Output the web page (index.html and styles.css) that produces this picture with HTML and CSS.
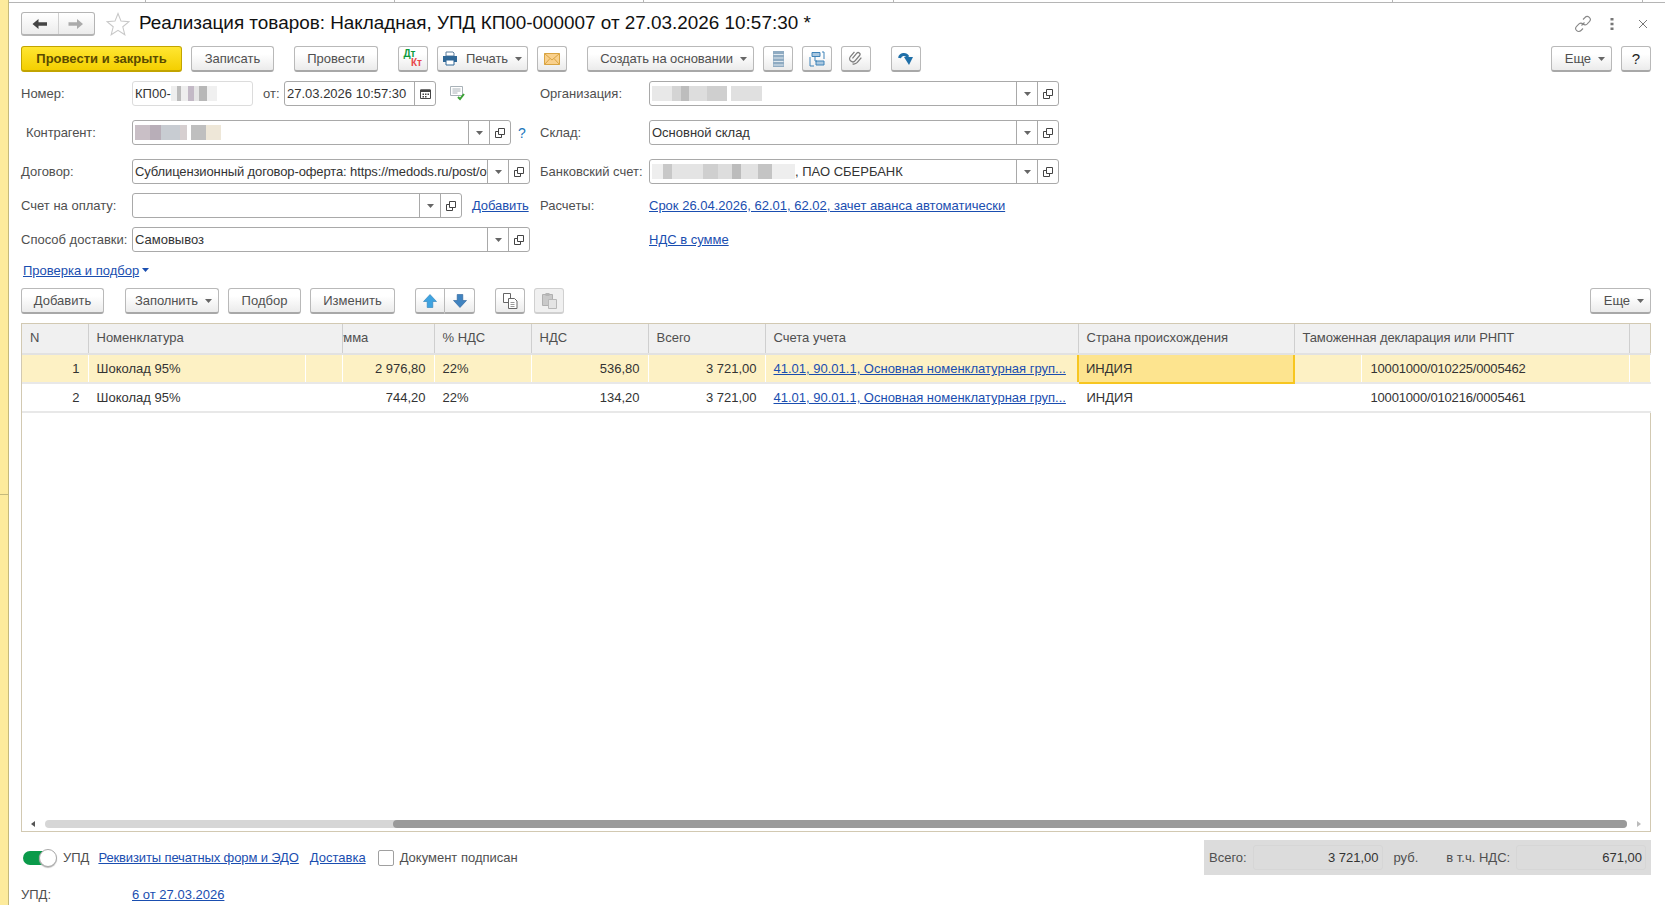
FILE: index.html
```html
<!DOCTYPE html>
<html lang="ru">
<head>
  <meta charset="UTF-8">
  <title>Реализация товаров: Накладная, УПД КП00-000007</title>
  <link rel="stylesheet" href="styles.css">
</head>
<body>
  <svg class="sprite" xmlns="http://www.w3.org/2000/svg">
    <symbol id="i-open" viewBox="0 0 12 12"><path d="M4.5 1.5h6v6h-6zM4.5 4.5h-3v6h6v-3" fill="none" stroke="#444" stroke-width="1"/></symbol>
    <symbol id="i-drop" viewBox="0 0 7 4"><path d="M0 0h7L3.500 4z" fill="currentColor"/></symbol>
  </svg>

  <div class="side-strip">
    <div class="side-top"></div>
    <div class="side-bottom"></div>
  </div>

  <div class="window">
    <div class="top-line">
      <span class="tab-a"></span><span class="tab-b"></span><span class="tab-c"></span><span class="tab-d"></span><span class="tab-e"></span><span class="tab-f"></span>
    </div>

    <div class="main">
      <!-- title -->
      <div class="title-row">
        <div class="nav-group">
          <button class="nav-btn"><svg width="16" height="12" viewBox="0 0 16 12"><path d="M0.5 6L6.5 1v3.2H15v3.6H6.5V11z" fill="#444"/></svg></button>
          <button class="nav-btn"><svg width="16" height="12" viewBox="0 0 16 12"><path d="M15 6L9 1v3.2H0.5v3.6H9V11z" fill="#aaa"/></svg></button>
        </div>
        <svg class="star" width="24" height="24" viewBox="0 0 24 24"><path d="M12 1.5l3 7.6 8 .6-6.2 5.1 2 7.9L12 18.4l-6.8 4.3 2-7.9L1 9.7l8-.6z" fill="#fff" stroke="#c8c8c8" stroke-width="1.1"/></svg>
        <h1 class="doc-title">Реализация товаров: Накладная, УПД КП00-000007 от 27.03.2026 10:57:30 *</h1>
        <div class="win-icons">
          <svg width="18" height="18" viewBox="0 0 18 18"><path d="M7.5 10.5l3-3M9 4.500l2-2a3 3 0 0 1 4.400 4.200l-2.400 2.400a3 3 0 0 1-4-.2M9 13.500l-2 2a3 3 0 0 1-4.400-4.200L5 8.900a3 3 0 0 1 4 .2" fill="none" stroke="#888" stroke-width="1.1"/></svg>
          <svg class="kebab" width="4" height="12" viewBox="0 0 4 12"><path d="M0.5 0h3v2.5h-3zM0.5 4.700h3v2.500h-3zM0.5 9.400h3v2.500h-3z" fill="#777"/></svg>
          <svg class="close" width="10" height="10" viewBox="0 0 10 10"><path d="M1 1l8 8M9 1l-8 8" stroke="#777" stroke-width="1"/></svg>
        </div>
      </div>

      <!-- main toolbar -->
      <div class="toolbar">
        <button class="btn btn-primary w-161">Провести и закрыть</button>
        <button class="btn w-83 ml-9">Записать</button>
        <button class="btn w-84 ml-20">Провести</button>
        <button class="btn btn-icon ml-20 dtkt"><span class="dt">Дт</span><span class="kt">Кт</span></button>
        <button class="btn btn-drop btn-print w-91 ml-9">
          <svg class="print-ico" width="16" height="15" viewBox="0 0 16 15"><path d="M4 1h7l1 1v3H4z" fill="#fff" stroke="#5b7d9c"/><path d="M1 5h14v6H1z" fill="#2f6796"/><path d="M4 9h8v5H4z" fill="#fff" stroke="#2f6796"/></svg>
          Печать <svg class="drop" width="7" height="4"><use href="#i-drop"/></svg>
        </button>
        <button class="btn btn-icon ml-9">
          <svg width="16" height="12" viewBox="0 0 16 12"><path d="M0.5 0.5h15v11h-15z" fill="#f9d08c" stroke="#d9a441"/><path d="M0.5 0.5L8 7l7.500-6.500M0.5 11.500L6 5.500M15.500 11.500L10 5.500" fill="none" stroke="#d9a441"/></svg>
        </button>
        <button class="btn btn-drop w-167 ml-20">Создать на основании <svg class="drop" width="7" height="4"><use href="#i-drop"/></svg></button>
        <button class="btn btn-icon ml-9">
          <svg width="11" height="16" viewBox="0 0 11 16"><path d="M0 0h11v16H0z" fill="#8fabc2"/><path d="M0.500 3.500h10M0.500 7h10M0.500 10.500h10M0.500 14h10" stroke="#dfe8ef"/></svg>
        </button>
        <button class="btn btn-icon ml-9">
          <svg width="16" height="16" viewBox="0 0 16 16"><path d="M3 1.500h8v4H3zM7 10h8v4H7z" fill="#a9c7df" stroke="#3f83b8"/><path d="M1 6v9h4M15 8V1h-2M6 6v4h2" fill="none" stroke="#3f83b8"/></svg>
        </button>
        <button class="btn btn-icon ml-9">
          <svg width="16" height="16" viewBox="0 0 16 16"><path d="M6 12V4.500a2 2 0 0 1 4 0V12a3.500 3.500 0 0 1-7 0V5M13 5v7a5.500 5.500 0 0 1-3 4.600" transform="rotate(40 8 8) translate(-0.5 -1) scale(0.9)" fill="none" stroke="#7d7d7d" stroke-width="1.400"/></svg>
        </button>
        <button class="btn btn-icon ml-20">
          <svg width="16" height="15" viewBox="0 0 16 15"><path d="M1.500 7C2.500 3 7.500 2 10 6" fill="none" stroke="#1f6fa8" stroke-width="3"/><path d="M6 6h9l-4 8z" fill="#1f6fa8"/></svg>
        </button>
        <div class="toolbar-end">
          <button class="btn btn-drop w-61">Еще <svg class="drop" width="7" height="4"><use href="#i-drop"/></svg></button>
          <button class="btn btn-help ml-9">?</button>
        </div>
      </div>

      <!-- form fields -->
      <div class="form">
        <div class="form-row">
          <div class="col-left">
            <span class="label">Номер:</span>
            <div class="field field-plain w-121"><span class="field-text">КП00-<span class="mosaic mosaic-num"></span></span></div>
            <span class="label-from">от:</span>
            <div class="field w-152">
              <span class="field-text">27.03.2026 10:57:30</span>
              <span class="field-btn">
                <svg width="11" height="11" viewBox="0 0 11 11"><path d="M0.500 2h10v8.500h-10z" fill="#fff" stroke="#444"/><path d="M0.500 1.500h10V4h-10zM2.500 5.500h1.500V7H2.500zM5 5.500h1.500V7H5zM7.500 5.500H9V7H7.500zM2.500 8h1.500v1.500H2.500zM5 8h1.500v1.500H5z" fill="#444"/></svg>
              </span>
            </div>
            <svg class="comment-ico" width="16" height="15" viewBox="0 0 16 15"><path d="M0.500 0.500h12v9h-12zM2.500 3h8M2.500 5h8M2.500 7h5" fill="none" stroke="#a9b2b8"/><path d="M8 11l2 2 4-5" fill="none" stroke="#3aa335" stroke-width="2"/></svg>
          </div>
          <div class="col-right">
            <span class="label">Организация:</span>
            <div class="field w-410">
              <span class="field-text"><span class="mosaic mosaic-org"></span></span>
              <span class="field-btn"><svg width="7" height="4"><use href="#i-drop"/></svg></span>
              <span class="field-btn"><svg width="12" height="12"><use href="#i-open"/></svg></span>
            </div>
          </div>
        </div>

        <div class="form-row row-wide">
          <div class="col-left">
            <span class="label label-shift">Контрагент:</span>
            <div class="field w-379">
              <span class="field-text"><span class="mosaic mosaic-agent"></span></span>
              <span class="field-btn"><svg width="7" height="4"><use href="#i-drop"/></svg></span>
              <span class="field-btn"><svg width="12" height="12"><use href="#i-open"/></svg></span>
            </div>
            <span class="help-mark">?</span>
          </div>
          <div class="col-right">
            <span class="label">Склад:</span>
            <div class="field w-410">
              <span class="field-text">Основной склад</span>
              <span class="field-btn"><svg width="7" height="4"><use href="#i-drop"/></svg></span>
              <span class="field-btn"><svg width="12" height="12"><use href="#i-open"/></svg></span>
            </div>
          </div>
        </div>

        <div class="form-row row-wide">
          <div class="col-left">
            <span class="label">Договор:</span>
            <div class="field w-398">
              <span class="field-text text-tight">Сублицензионный договор-оферта: https://medods.ru/post/oferta</span>
              <span class="field-btn"><svg width="7" height="4"><use href="#i-drop"/></svg></span>
              <span class="field-btn"><svg width="12" height="12"><use href="#i-open"/></svg></span>
            </div>
          </div>
          <div class="col-right">
            <span class="label">Банковский счет:</span>
            <div class="field w-410">
              <span class="field-text"><span class="mosaic mosaic-bank"></span>, ПАО СБЕРБАНК</span>
              <span class="field-btn"><svg width="7" height="4"><use href="#i-drop"/></svg></span>
              <span class="field-btn"><svg width="12" height="12"><use href="#i-open"/></svg></span>
            </div>
          </div>
        </div>

        <div class="form-row">
          <div class="col-left">
            <span class="label">Счет на оплату:</span>
            <div class="field w-330">
              <span class="field-text"></span>
              <span class="field-btn"><svg width="7" height="4"><use href="#i-drop"/></svg></span>
              <span class="field-btn"><svg width="12" height="12"><use href="#i-open"/></svg></span>
            </div>
            <a class="link link-add" href="#">Добавить</a>
          </div>
          <div class="col-right">
            <span class="label">Расчеты:</span>
            <a class="link" href="#">Срок 26.04.2026, 62.01, 62.02, зачет аванса автоматически</a>
          </div>
        </div>

        <div class="form-row">
          <div class="col-left">
            <span class="label">Способ доставки:</span>
            <div class="field w-398">
              <span class="field-text">Самовывоз</span>
              <span class="field-btn"><svg width="7" height="4"><use href="#i-drop"/></svg></span>
              <span class="field-btn"><svg width="12" height="12"><use href="#i-open"/></svg></span>
            </div>
          </div>
          <div class="col-right">
            <span class="label"></span>
            <a class="link" href="#">НДС в сумме</a>
          </div>
        </div>
      </div>

      <div class="check-row">
        <a class="link-plain" href="#">Проверка и подбор</a>
        <svg class="drop-blue" width="7" height="4"><use href="#i-drop"/></svg>
      </div>

      <!-- table toolbar -->
      <div class="toolbar toolbar-table">
        <button class="btn w-83">Добавить</button>
        <button class="btn btn-drop w-94 ml-21">Заполнить <svg class="drop" width="7" height="4"><use href="#i-drop"/></svg></button>
        <button class="btn w-73 ml-9">Подбор</button>
        <button class="btn w-85 ml-9">Изменить</button>
        <div class="btn-pair ml-20">
          <button class="btn btn-half">
            <svg width="14" height="14" viewBox="0 0 14 14"><path d="M7 0.500L13.500 7.500H9.800V13.500H4.200V7.500H0.500z" fill="#3fa3e0" stroke="#2a7fb8" stroke-width="0.6"/></svg>
          </button>
          <button class="btn btn-half">
            <svg width="14" height="14" viewBox="0 0 14 14"><path d="M7 13.500L13.500 6.500H9.800V0.500H4.200V6.500H0.500z" fill="#3f83c0" stroke="#2a5f98" stroke-width="0.6"/></svg>
          </button>
        </div>
        <button class="btn btn-icon ml-20">
          <svg width="15" height="16" viewBox="0 0 15 16"><path d="M0.500 0.500h7v9h-7z" fill="#fff" stroke="#666"/><path d="M5.500 5.500h6l2.500 2.500v7.500h-8.500z" fill="#fff" stroke="#666"/><path d="M7.500 9.500h4M7.500 11.500h4M7.500 13.500h4" stroke="#999"/></svg>
        </button>
        <button class="btn btn-icon btn-off ml-9">
          <svg width="15" height="17" viewBox="0 0 15 17"><path d="M0.500 2.500h10v11h-10z" fill="#c9c9c9" stroke="#b0b0b0"/><path d="M3.500 1h4v3h-4z" fill="#b5b5b5"/><path d="M6.500 7.500h8v9h-8z" fill="#e4e4e4" stroke="#b8b8b8"/></svg>
        </button>
        <div class="toolbar-end">
          <button class="btn btn-drop w-61">Еще <svg class="drop" width="7" height="4"><use href="#i-drop"/></svg></button>
        </div>
      </div>

      <!-- goods table -->
      <div class="grid-box">
        <table class="goods">
          <colgroup>
            <col class="c-n"><col class="c-nom"><col class="c-nom2"><col class="c-sum"><col class="c-vat"><col class="c-tax"><col class="c-total"><col class="c-acc"><col class="c-country"><col class="c-gtd1"><col class="c-gtd2"><col class="c-end">
          </colgroup>
          <thead>
            <tr>
              <th>N</th>
              <th colspan="2">Номенклатура</th>
              <th class="th-clip">Сумма</th>
              <th>% НДС</th>
              <th>НДС</th>
              <th>Всего</th>
              <th>Счета учета</th>
              <th>Страна происхождения</th>
              <th colspan="2" class="text-tight">Таможенная декларация или РНПТ</th>
              <th></th>
            </tr>
          </thead>
          <tbody>
            <tr class="row-current">
              <td class="num">1</td>
              <td>Шоколад 95%</td>
              <td></td>
              <td class="num">2 976,80</td>
              <td>22%</td>
              <td class="num">536,80</td>
              <td class="num">3 721,00</td>
              <td><a class="link" href="#">41.01, 90.01.1, Основная номенклатурная груп...</a></td>
              <td class="cell-focus">ИНДИЯ</td>
              <td></td>
              <td class="gtd">10001000/010225/0005462</td>
              <td></td>
            </tr>
            <tr>
              <td class="num">2</td>
              <td>Шоколад 95%</td>
              <td></td>
              <td class="num td-sum">744,20</td>
              <td>22%</td>
              <td class="num">134,20</td>
              <td class="num">3 721,00</td>
              <td><a class="link" href="#">41.01, 90.01.1, Основная номенклатурная груп...</a></td>
              <td>ИНДИЯ</td>
              <td></td>
              <td class="gtd">10001000/010216/0005461</td>
              <td></td>
            </tr>
          </tbody>
        </table>
        <div class="hscroll">
          <span class="arrow-left"></span>
          <div class="hscroll-track"><div class="hscroll-thumb"></div></div>
          <span class="arrow-right"></span>
        </div>
      </div>

      <!-- bottom -->
      <div class="bottom-row">
        <div class="toggle"><span class="toggle-bar"></span><span class="toggle-knob"></span></div>
        <span class="label-upd">УПД</span>
        <a class="link text-tight" href="#">Реквизиты печатных форм и ЭДО</a>
        <a class="link ml-11" href="#">Доставка</a>
        <span class="checkbox"></span>
        <span class="label">Документ подписан</span>
        <div class="totals">
          <span class="label">Всего:</span>
          <span class="total-field tf-sum">3 721,00</span>
          <span class="label ml-11">руб.</span>
          <span class="label ml-28">в т.ч. НДС:</span>
          <span class="total-field tf-vat">671,00</span>
        </div>
      </div>
      <div class="upd-row">
        <span class="label">УПД:</span>
        <a class="link" href="#">6 от 27.03.2026</a>
      </div>
    </div>
  </div>
</body>
</html>
```

FILE: styles.css
```css
html, body {
  margin: 0;
  padding: 0;
  width: 100%;
  height: 100%;
  overflow: hidden;
  background: #fff;
  color: #333;
  font-family: "Liberation Sans", Arial, sans-serif;
  font-size: 13px;
}
body {
  display: flex;
}
button {
  font: inherit;
}
svg {
  color: #666;
}
.sprite {
  display: none;
}
.side-strip {
  width: 8px;
  flex: none;
  display: flex;
  flex-direction: column;
  background: #fdeb9c;
  border-right: 1px solid #c4b97c;
}
.side-top {
  height: 494px;
  border-bottom: 1px solid #c4b97c;
}
.side-bottom {
  flex: 1;
}
.window {
  flex: 1;
  min-width: 0;
}
.top-line {
  display: flex;
  height: 2px;
  border-bottom: 1px solid #b5b5b5;
}
.top-line span {
  border-right: 1px solid #b5b5b5;
}
.tab-a { width: 136px; }
.tab-b { width: 248px; }
.tab-c { width: 248px; }
.tab-d { width: 249px; }
.tab-e { width: 498px; }
.tab-f { width: 249px; }

.main {
  padding: 0 14px 0 12px;
}
.title-row {
  display: flex;
  align-items: center;
  height: 24px;
  margin-top: 9px;
}
.nav-group {
  display: flex;
  width: 74px;
  height: 24px;
  box-sizing: border-box;
  border: 1px solid #b4b4b4;
  border-bottom-width: 2px;
  border-radius: 3px;
  background: linear-gradient(#fff, #ececec);
}
.nav-btn {
  flex: 1;
  padding: 0;
  border: none;
  background: none;
  display: flex;
  align-items: center;
  justify-content: center;
}
.nav-btn + .nav-btn {
  border-left: 1px solid #d0d0d0;
}
.star {
  margin-left: 11px;
}
.doc-title {
  margin: -2px 0 0 9px;
  font-size: 18.9px;
  font-weight: normal;
  color: #111;
  white-space: nowrap;
}
.win-icons {
  margin-left: auto;
  display: flex;
  align-items: center;
}
.kebab {
  margin-left: 18px;
}
.close {
  margin-left: 24px;
  margin-right: 3px;
}

.toolbar {
  display: flex;
  align-items: center;
  height: 26px;
  margin-top: 10px;
}
.toolbar-end {
  margin-left: auto;
  display: flex;
}
.btn {
  height: 26px;
  box-sizing: border-box;
  padding: 0;
  border: 1px solid #b9b9b9;
  border-bottom: 2px solid #a8a8a8;
  border-radius: 3px;
  background: linear-gradient(#fff 30%, #ebebeb);
  color: #505050;
  display: flex;
  align-items: center;
  justify-content: center;
  gap: 6px;
  white-space: nowrap;
}
.btn-primary {
  background: linear-gradient(#ffe632, #f4cf00);
  border-color: #c2a400;
  color: #5a4a00;
  font-weight: bold;
}
.btn-drop {
  justify-content: flex-end;
  padding-right: 6px;
  gap: 7px;
  letter-spacing: -0.1px;
}
.btn-print {
  padding-right: 5px;
}
.print-ico {
  margin-right: 1px;
}
.btn-icon { width: 30px; }
.btn-help { width: 30px; font-size: 15px; color: #222; }
.btn-off {
  background: #f0f0f0;
  border-color: #d0d0d0;
}
.w-61 { width: 61px; }
.w-73 { width: 73px; }
.w-83 { width: 83px; }
.w-84 { width: 84px; }
.w-85 { width: 85px; }
.w-91 { width: 91px; }
.w-94 { width: 94px; }
.w-161 { width: 161px; }
.w-167 { width: 167px; }
.ml-9 { margin-left: 9px; }
.ml-11 { margin-left: 11px; }
.ml-20 { margin-left: 20px; }
.ml-21 { margin-left: 21px; }
.ml-28 { margin-left: 28px; }
.dtkt {
  flex-direction: column;
  gap: 0;
  font-size: 10px;
  font-weight: bold;
  line-height: 9px;
  padding-bottom: 1px;
}
.dt { color: #0a9a3c; margin-right: 7px; }
.kt { color: #e8484a; margin-left: 7px; }

.form {
  margin-top: 9px;
}
.form-row {
  display: flex;
  height: 25px;
  margin-top: 9px;
}
.form-row:first-child {
  margin-top: 0;
}
.row-wide {
  margin-top: 14px;
}
.col-left {
  width: 519px;
  flex: none;
  display: flex;
  align-items: center;
}
.col-right {
  flex: 1;
  display: flex;
  align-items: center;
}
.col-left > .label {
  width: 111px;
  flex: none;
}
.col-right > .label {
  width: 109px;
  flex: none;
}
.label {
  color: #4f4f4f;
  white-space: nowrap;
}
.label-shift {
  box-sizing: border-box;
  padding-left: 5px;
  letter-spacing: -0.1px;
}
.label-from {
  margin-left: 10px;
  width: 21px;
  color: #4f4f4f;
}
.field {
  height: 25px;
  box-sizing: border-box;
  display: flex;
  align-items: center;
  border: 1px solid #a9a9a9;
  border-radius: 3px;
  background: #fff;
  overflow: hidden;
}
.field-plain {
  border-color: #dcdcdc;
}
.field-text {
  flex: 1;
  min-width: 0;
  padding-left: 2px;
  overflow: hidden;
  white-space: nowrap;
  color: #333;
}
.text-tight {
  letter-spacing: -0.12px;
}
.field-btn {
  width: 21px;
  height: 100%;
  box-sizing: border-box;
  flex: none;
  display: flex;
  align-items: center;
  justify-content: center;
  border-left: 1px solid #a9a9a9;
}
.w-121 { width: 121px; }
.w-152 { width: 152px; }
.w-330 { width: 330px; }
.w-379 { width: 379px; }
.w-398 { width: 398px; }
.w-410 { width: 410px; }
.comment-ico {
  margin-left: 14px;
}
.help-mark {
  margin-left: 7px;
  color: #1b76bb;
  font-size: 14px;
}
.mosaic {
  display: inline-block;
  height: 15px;
  vertical-align: -3px;
  filter: blur(0.6px);
}
.mosaic-num {
  width: 46px;
  background: linear-gradient(90deg, #eee 0 12%, #bbb 12% 22%, #eee 22% 38%, #c3b9c6 38% 50%, #e5e5e5 50% 60%, #b8b8b8 60% 78%, #f0f0f0 78%);
}
.mosaic-org {
  width: 110px;
  background: linear-gradient(90deg, #e8e8e8 0 18%, #d4d4d4 18% 26%, #bdbdbd 26% 34%, #ddd 34% 50%, #cfcfcf 50% 68%, #fff 68% 72%, #e0e0e0 72% 100%);
}
.mosaic-agent {
  width: 86px;
  background: linear-gradient(90deg, #c9bfc6 0 18%, #b8aeb8 18% 30%, #c8ccd2 30% 52%, #d6cfd0 52% 60%, #fff 60% 65%, #bfbfbf 65% 82%, #eee7d8 82% 100%);
}
.mosaic-bank {
  width: 143px;
  background: linear-gradient(90deg, #eee 0 8%, #c8c8c8 8% 14%, #e4e4e4 14% 36%, #cfcfcf 36% 46%, #ddd 46% 56%, #bcbcbc 56% 62%, #e2e2e2 62% 74%, #c4c4c4 74% 84%, #eee 84%);
}
.link,
.link-plain {
  color: #1a4eb0;
  text-decoration: underline;
  white-space: nowrap;
}
.link-add {
  margin-left: 10px;
  letter-spacing: -0.1px;
}

.check-row {
  display: flex;
  align-items: center;
  height: 16px;
  margin-top: 10px;
  padding-left: 2px;
}
.drop-blue {
  margin-left: 3px;
  color: #1a4eb0;
}
.toolbar-table {
  margin-top: 10px;
}
.btn-pair {
  display: flex;
}
.btn-half {
  width: 30px;
  border-radius: 3px 0 0 3px;
}
.btn-half + .btn-half {
  border-left: none;
  border-radius: 0 3px 3px 0;
}

.grid-box {
  height: 509px;
  margin-top: 9px;
  box-sizing: border-box;
  border: 1px solid #d2c9b2;
  display: flex;
  flex-direction: column;
}
.goods {
  width: 1628px;
  table-layout: fixed;
  border-collapse: collapse;
  color: #333;
}
.c-n { width: 66px; }
.c-nom { width: 217px; }
.c-nom2 { width: 37px; }
.c-sum { width: 92px; }
.c-vat { width: 97px; }
.c-tax { width: 117px; }
.c-total { width: 117px; }
.c-acc { width: 313px; }
.c-country { width: 216px; }
.c-gtd1 { width: 67px; }
.c-gtd2 { width: 268px; }
.c-end { width: 21px; }
.goods th {
  height: 30px;
  padding: 0 0 2px 8px;
  box-sizing: border-box;
  background: #f0f0f0;
  border-right: 1px solid #cfcfcf;
  border-bottom: 2px solid #e2e2e2;
  font-weight: normal;
  text-align: left;
  color: #4f4f4f;
  white-space: nowrap;
  overflow: hidden;
}
.goods th:last-child {
  border-right: none;
}
.goods .th-clip {
  padding-left: 1px;
  text-indent: -16px;
}
.goods td {
  height: 29px;
  padding: 0 8px;
  box-sizing: border-box;
  border-right: 1px solid #fff;
  border-bottom: 2px solid #e8e8e8;
  white-space: nowrap;
  overflow: hidden;
}
.goods .num {
  text-align: right;
}
.goods .gtd {
  padding-left: 9px;
  letter-spacing: -0.17px;
}
.goods .td-sum {
  border-left: 1px solid #cfcfcf;
}
.row-current td {
  background: #fdf1c4;
}
.goods .row-current .cell-focus {
  background: #fde48f;
  border: 2px solid #f7c620;
  padding-left: 7px;
}
.hscroll {
  margin-top: auto;
  margin-bottom: 3px;
  height: 8px;
  display: flex;
  align-items: center;
}
.arrow-left,
.arrow-right {
  width: 0;
  height: 0;
  flex: none;
  border-top: 3px solid transparent;
  border-bottom: 3px solid transparent;
}
.arrow-left {
  margin-left: 9px;
  border-right: 4px solid #555;
}
.arrow-right {
  margin-left: 10px;
  margin-right: 9px;
  border-left: 4px solid #bbb;
}
.hscroll-track {
  flex: 1;
  height: 8px;
  margin-left: 10px;
  background: #d6d6d6;
  border-radius: 4px;
  display: flex;
  justify-content: flex-end;
}
.hscroll-thumb {
  width: 1234px;
  height: 8px;
  background: #9a9a9a;
  border-radius: 4px;
}

.bottom-row {
  display: flex;
  align-items: center;
  height: 35px;
  margin-top: 8px;
}
.toggle {
  display: flex;
  align-items: center;
  width: 34px;
  margin-left: 2px;
}
.toggle-bar {
  width: 22px;
  height: 14px;
  background: #0a9a4a;
  border-radius: 7px 0 0 7px;
}
.toggle-knob {
  width: 16px;
  height: 16px;
  margin-left: -5px;
  flex: none;
  background: #fff;
  border: 1px solid #a8a8a8;
  border-radius: 50%;
  box-shadow: 0 1px 1px #bbb;
}
.label-upd {
  margin-left: 6px;
  margin-right: 9px;
  color: #4f4f4f;
}
.checkbox {
  width: 14px;
  height: 14px;
  margin-left: 12px;
  margin-right: 6px;
  border: 1px solid #a0a0a0;
  border-radius: 2px;
}
.totals {
  margin-left: auto;
  width: 447px;
  height: 35px;
  box-sizing: border-box;
  padding: 0 5px;
  display: flex;
  align-items: center;
  background: #dcdcdc;
}
.total-field {
  height: 25px;
  box-sizing: border-box;
  padding-right: 3px;
  display: flex;
  align-items: center;
  justify-content: flex-end;
  border: 1px solid #d6d6d6;
  border-radius: 3px;
  color: #333;
}
.tf-sum {
  width: 131px;
  margin-left: 6px;
}
.tf-vat {
  width: 131px;
  margin-left: 6px;
}
.upd-row {
  display: flex;
  align-items: center;
  height: 20px;
  margin-top: 9px;
}
.upd-row .label {
  width: 111px;
}
```
